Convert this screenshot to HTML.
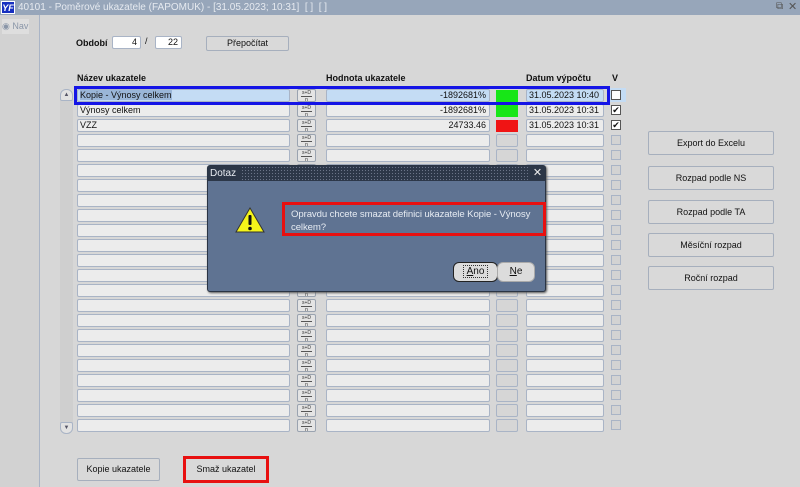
<!DOCTYPE html>
<html><head><meta charset="utf-8"><style>
*{box-sizing:border-box;margin:0;padding:0}
body{width:800px;height:487px;overflow:hidden;background:#d7d7d7;font-family:"Liberation Sans",Arial,sans-serif;font-size:9px;color:#111;position:relative}
.a{position:absolute}
.f{position:absolute;height:13px;background:#ececec;border:1px solid #a9b4c6;border-radius:2px}
.ic{position:absolute;left:297px;width:19px;height:13px;background:#e4e4e4;border:1px solid #9aa3b0;border-radius:2px;font-size:5px;line-height:5px;text-align:center;color:#333;overflow:hidden;padding-top:1px}
.ic::before{content:"s+D";display:block;border-bottom:1px solid #555;margin:0 3px 1px}
.ic::after{content:"n";display:block}
.cb{position:absolute;left:611px;width:10px;height:10px;border:1px solid #a9b4c6;background:#d3d3d3}
.btn{position:absolute;background:#d9d9d9;border:1px solid #a6afbd;border-radius:2px;text-align:center;font-size:9px}
.lbl{position:absolute;font-weight:bold;font-size:9px}
</style></head><body>
<div class="a" style="left:0;top:0;width:800px;height:15px;background:#97a6ba"></div>
<div class="a" style="left:1px;top:1px;width:14px;height:13px;background:#1730c0;color:#fff;font-weight:bold;font-style:italic;font-size:9px;line-height:13px;text-align:center;border:1px solid #fff">YF</div>
<div class="a" style="left:18px;top:2px;color:#e6eaf0;font-size:10px">40101 - Poměrové ukazatele (FAPOMUK) - [31.05.2023; 10:31]&nbsp; [ ]&nbsp; [ ]</div>
<div class="a" style="left:776px;top:1px;color:#555;font-size:10px">⧉</div>
<div class="a" style="left:788px;top:0px;color:#555;font-size:11px">✕</div>
<div class="a" style="left:0;top:15px;width:40px;height:472px;background:#d2d2d2;border-right:1px solid #a9b4c6"></div>
<div class="a" style="left:2px;top:19px;width:27px;height:15px;background:#dedede;color:#8a96a8;font-size:9px;line-height:15px">◉ Nav</div>

<div class="lbl" style="left:76px;top:38px">Období</div>
<div class="f" style="left:112px;top:36px;width:29px;background:#fff;text-align:right;padding-right:3px;line-height:11px">4</div>
<div class="a" style="left:145px;top:36px">/</div>
<div class="f" style="left:155px;top:36px;width:27px;background:#fff;text-align:right;padding-right:3px;line-height:11px">22</div>
<div class="btn" style="left:206px;top:36px;width:83px;height:15px;line-height:13px">Přepočítat</div>

<div class="lbl" style="left:77px;top:73px">Název ukazatele</div>
<div class="lbl" style="left:326px;top:73px">Hodnota ukazatele</div>
<div class="lbl" style="left:526px;top:73px">Datum výpočtu</div>
<div class="lbl" style="left:612px;top:73px">V</div>

<div class="a" style="left:60px;top:89px;width:13px;height:345px;background:#cfcfcf;border-radius:6px"></div>
<div class="a" style="left:60px;top:89px;width:13px;height:12px;background:#e2e2e2;border:1px solid #a9b4c6;border-radius:6px 6px 2px 2px;font-size:6px;text-align:center;color:#556;line-height:10px">▲</div>
<div class="a" style="left:60px;top:422px;width:13px;height:12px;background:#e2e2e2;border:1px solid #a9b4c6;border-radius:2px 2px 6px 6px;font-size:6px;text-align:center;color:#556;line-height:10px">▼</div>

<div class="a" style="left:0;top:0">
<div class="f" style="left:77px;top:89px;width:213px;background:#c4dcf4;line-height:11px;padding-left:2px"><span style="background:#9ab6d8">Kopie - Výnosy celkem</span></div><div class="ic" style="top:89px"></div><div class="f" style="left:326px;top:89px;width:164px;background:#c4dcf4;text-align:right;padding-right:3px;line-height:11px">-1892681%</div><div class="a" style="left:496px;top:90px;width:22px;height:12px;background:#17e617"></div><div class="f" style="left:526px;top:89px;width:78px;background:#c4dcf4;line-height:11px;padding-left:2px">31.05.2023 10:40</div><div class="a" style="left:608px;top:88px;width:18px;height:14px;background:#c4dcf4"></div><div class="cb" style="top:90px;background:#fff;border-color:#555"></div>
<div class="f" style="left:77px;top:104px;width:213px;line-height:11px;padding-left:2px">Výnosy celkem</div><div class="ic" style="top:104px"></div><div class="f" style="left:326px;top:104px;width:164px;text-align:right;padding-right:3px;line-height:11px">-1892681%</div><div class="a" style="left:496px;top:105px;width:22px;height:12px;background:#17e617"></div><div class="f" style="left:526px;top:104px;width:78px;line-height:11px;padding-left:2px">31.05.2023 10:31</div><div class="cb" style="top:105px;background:#fff;border-color:#555;font-size:9px;line-height:8px;text-align:center">✔</div>
<div class="f" style="left:77px;top:119px;width:213px;line-height:11px;padding-left:2px">VZZ</div><div class="ic" style="top:119px"></div><div class="f" style="left:326px;top:119px;width:164px;text-align:right;padding-right:3px;line-height:11px">24733.46</div><div class="a" style="left:496px;top:120px;width:22px;height:12px;background:#f01414"></div><div class="f" style="left:526px;top:119px;width:78px;line-height:11px;padding-left:2px">31.05.2023 10:31</div><div class="cb" style="top:120px;background:#fff;border-color:#555;font-size:9px;line-height:8px;text-align:center">✔</div>
</div>
<div class="a" style="left:74px;top:86px;width:536px;height:19px;border:3px solid #1414e6"></div>

<div class="a" style="left:0;top:0">
<div class="f" style="left:77px;top:134px;width:213px"></div><div class="ic" style="top:134px"></div><div class="f" style="left:326px;top:134px;width:164px"></div><div class="f" style="left:496px;top:134px;width:22px;background:#d6d6d6"></div><div class="f" style="left:526px;top:134px;width:78px"></div><div class="cb" style="top:135px"></div>
<div class="f" style="left:77px;top:149px;width:213px"></div><div class="ic" style="top:149px"></div><div class="f" style="left:326px;top:149px;width:164px"></div><div class="f" style="left:496px;top:149px;width:22px;background:#d6d6d6"></div><div class="f" style="left:526px;top:149px;width:78px"></div><div class="cb" style="top:150px"></div>
<div class="f" style="left:77px;top:164px;width:213px"></div><div class="ic" style="top:164px"></div><div class="f" style="left:326px;top:164px;width:164px"></div><div class="f" style="left:496px;top:164px;width:22px;background:#d6d6d6"></div><div class="f" style="left:526px;top:164px;width:78px"></div><div class="cb" style="top:165px"></div>
<div class="f" style="left:77px;top:179px;width:213px"></div><div class="ic" style="top:179px"></div><div class="f" style="left:326px;top:179px;width:164px"></div><div class="f" style="left:496px;top:179px;width:22px;background:#d6d6d6"></div><div class="f" style="left:526px;top:179px;width:78px"></div><div class="cb" style="top:180px"></div>
<div class="f" style="left:77px;top:194px;width:213px"></div><div class="ic" style="top:194px"></div><div class="f" style="left:326px;top:194px;width:164px"></div><div class="f" style="left:496px;top:194px;width:22px;background:#d6d6d6"></div><div class="f" style="left:526px;top:194px;width:78px"></div><div class="cb" style="top:195px"></div>
<div class="f" style="left:77px;top:209px;width:213px"></div><div class="ic" style="top:209px"></div><div class="f" style="left:326px;top:209px;width:164px"></div><div class="f" style="left:496px;top:209px;width:22px;background:#d6d6d6"></div><div class="f" style="left:526px;top:209px;width:78px"></div><div class="cb" style="top:210px"></div>
<div class="f" style="left:77px;top:224px;width:213px"></div><div class="ic" style="top:224px"></div><div class="f" style="left:326px;top:224px;width:164px"></div><div class="f" style="left:496px;top:224px;width:22px;background:#d6d6d6"></div><div class="f" style="left:526px;top:224px;width:78px"></div><div class="cb" style="top:225px"></div>
<div class="f" style="left:77px;top:239px;width:213px"></div><div class="ic" style="top:239px"></div><div class="f" style="left:326px;top:239px;width:164px"></div><div class="f" style="left:496px;top:239px;width:22px;background:#d6d6d6"></div><div class="f" style="left:526px;top:239px;width:78px"></div><div class="cb" style="top:240px"></div>
<div class="f" style="left:77px;top:254px;width:213px"></div><div class="ic" style="top:254px"></div><div class="f" style="left:326px;top:254px;width:164px"></div><div class="f" style="left:496px;top:254px;width:22px;background:#d6d6d6"></div><div class="f" style="left:526px;top:254px;width:78px"></div><div class="cb" style="top:255px"></div>
<div class="f" style="left:77px;top:269px;width:213px"></div><div class="ic" style="top:269px"></div><div class="f" style="left:326px;top:269px;width:164px"></div><div class="f" style="left:496px;top:269px;width:22px;background:#d6d6d6"></div><div class="f" style="left:526px;top:269px;width:78px"></div><div class="cb" style="top:270px"></div>
<div class="f" style="left:77px;top:284px;width:213px"></div><div class="ic" style="top:284px"></div><div class="f" style="left:326px;top:284px;width:164px"></div><div class="f" style="left:496px;top:284px;width:22px;background:#d6d6d6"></div><div class="f" style="left:526px;top:284px;width:78px"></div><div class="cb" style="top:285px"></div>
<div class="f" style="left:77px;top:299px;width:213px"></div><div class="ic" style="top:299px"></div><div class="f" style="left:326px;top:299px;width:164px"></div><div class="f" style="left:496px;top:299px;width:22px;background:#d6d6d6"></div><div class="f" style="left:526px;top:299px;width:78px"></div><div class="cb" style="top:300px"></div>
<div class="f" style="left:77px;top:314px;width:213px"></div><div class="ic" style="top:314px"></div><div class="f" style="left:326px;top:314px;width:164px"></div><div class="f" style="left:496px;top:314px;width:22px;background:#d6d6d6"></div><div class="f" style="left:526px;top:314px;width:78px"></div><div class="cb" style="top:315px"></div>
<div class="f" style="left:77px;top:329px;width:213px"></div><div class="ic" style="top:329px"></div><div class="f" style="left:326px;top:329px;width:164px"></div><div class="f" style="left:496px;top:329px;width:22px;background:#d6d6d6"></div><div class="f" style="left:526px;top:329px;width:78px"></div><div class="cb" style="top:330px"></div>
<div class="f" style="left:77px;top:344px;width:213px"></div><div class="ic" style="top:344px"></div><div class="f" style="left:326px;top:344px;width:164px"></div><div class="f" style="left:496px;top:344px;width:22px;background:#d6d6d6"></div><div class="f" style="left:526px;top:344px;width:78px"></div><div class="cb" style="top:345px"></div>
<div class="f" style="left:77px;top:359px;width:213px"></div><div class="ic" style="top:359px"></div><div class="f" style="left:326px;top:359px;width:164px"></div><div class="f" style="left:496px;top:359px;width:22px;background:#d6d6d6"></div><div class="f" style="left:526px;top:359px;width:78px"></div><div class="cb" style="top:360px"></div>
<div class="f" style="left:77px;top:374px;width:213px"></div><div class="ic" style="top:374px"></div><div class="f" style="left:326px;top:374px;width:164px"></div><div class="f" style="left:496px;top:374px;width:22px;background:#d6d6d6"></div><div class="f" style="left:526px;top:374px;width:78px"></div><div class="cb" style="top:375px"></div>
<div class="f" style="left:77px;top:389px;width:213px"></div><div class="ic" style="top:389px"></div><div class="f" style="left:326px;top:389px;width:164px"></div><div class="f" style="left:496px;top:389px;width:22px;background:#d6d6d6"></div><div class="f" style="left:526px;top:389px;width:78px"></div><div class="cb" style="top:390px"></div>
<div class="f" style="left:77px;top:404px;width:213px"></div><div class="ic" style="top:404px"></div><div class="f" style="left:326px;top:404px;width:164px"></div><div class="f" style="left:496px;top:404px;width:22px;background:#d6d6d6"></div><div class="f" style="left:526px;top:404px;width:78px"></div><div class="cb" style="top:405px"></div>
<div class="f" style="left:77px;top:419px;width:213px"></div><div class="ic" style="top:419px"></div><div class="f" style="left:326px;top:419px;width:164px"></div><div class="f" style="left:496px;top:419px;width:22px;background:#d6d6d6"></div><div class="f" style="left:526px;top:419px;width:78px"></div><div class="cb" style="top:420px"></div>
</div>

<div class="btn" style="left:648px;top:131px;width:126px;height:24px;line-height:22px">Export do Excelu</div>
<div class="btn" style="left:648px;top:166px;width:126px;height:24px;line-height:22px">Rozpad podle NS</div>
<div class="btn" style="left:648px;top:200px;width:126px;height:24px;line-height:22px">Rozpad podle TA</div>
<div class="btn" style="left:648px;top:233px;width:126px;height:24px;line-height:22px">Měsíční rozpad</div>
<div class="btn" style="left:648px;top:266px;width:126px;height:24px;line-height:22px">Roční rozpad</div>

<div class="btn" style="left:77px;top:458px;width:83px;height:23px;line-height:21px">Kopie ukazatele</div>
<div class="a" style="left:183px;top:456px;width:86px;height:27px;border:3px solid #e81010;text-align:center;line-height:21px;font-size:9px;background:#d9d9d9">Smaž ukazatel</div>

<div class="a" style="left:207px;top:165px;width:339px;height:127px;background:#5f7392;border:1px solid #2a3444;border-radius:3px;box-shadow:1px 1px 2px #555"></div>
<div class="a" style="left:208px;top:166px;width:337px;height:15px;background:#2c3748;background-image:radial-gradient(#6b7588 0.6px,transparent 0.8px);background-size:3px 3px"></div>
<div class="a" style="left:208px;top:166px;width:32px;height:15px;background:#2c3748;color:#e8ecf2;font-size:10px;line-height:15px;padding-left:2px">Dotaz</div>
<div class="a" style="left:530px;top:166px;width:15px;height:15px;background:#2c3748;color:#eee;font-size:11px;line-height:15px;text-align:center">✕</div>
<svg class="a" style="left:235px;top:207px" width="30" height="27" viewBox="0 0 30 27"><path d="M15 1 L29 25 L1 25 Z" fill="#f5f51a" stroke="#333" stroke-width="1"/><rect x="13.5" y="8" width="3" height="10" fill="#111" rx="1"/><circle cx="15" cy="21.5" r="1.8" fill="#111"/></svg>
<div class="a" style="left:282px;top:202px;width:264px;height:34px;border:3px solid #e81010;color:#e6ebf2;font-size:9.6px;line-height:13px;padding:3px 0 0 6px;letter-spacing:-0.1px">Opravdu chcete smazat definici ukazatele Kopie - Výnosy celkem?</div>
<div class="a" style="left:453px;top:262px;width:45px;height:20px;background:#dcdcdc;border:1px solid #222;border-radius:6px;text-align:center;line-height:18px;font-size:10px"><span style="outline:1px dotted #333;padding:0 3px"><u>A</u>no</span></div>
<div class="a" style="left:497px;top:262px;width:38px;height:20px;background:#dcdcdc;border:1px solid #aaa;border-radius:6px;text-align:center;line-height:18px;font-size:10px"><u>N</u>e</div>
</body></html>
